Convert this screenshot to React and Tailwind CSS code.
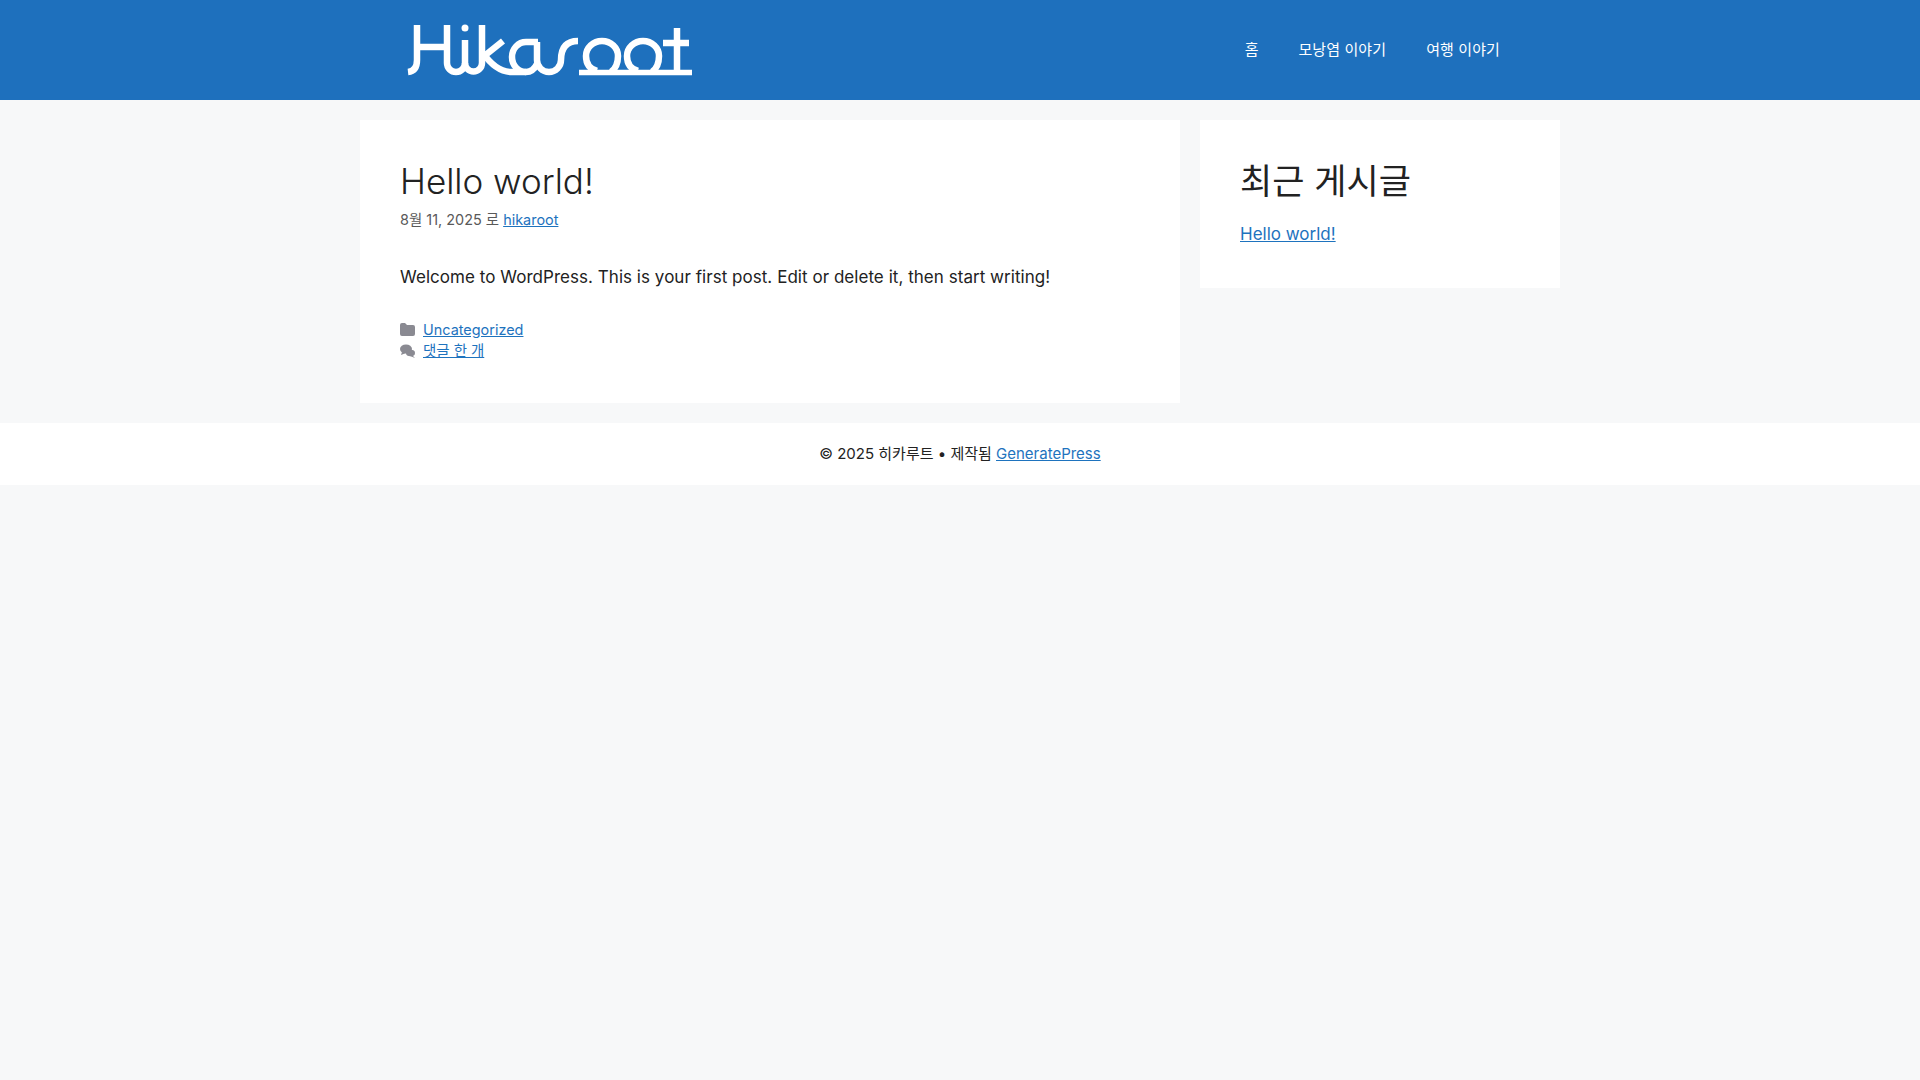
const font = 'font-["Inter","Noto_Sans_CJK_KR",sans-serif]';

function Logo() {
  return (
    <svg width="300" height="70" viewBox="400 15 300 70" fill="none" stroke="#fff" strokeWidth="6.5">
      {/* H */}
      <path d="M417 25 V60 Q417 71 408 72" />
      <path d="M417 47 H447" />
      {/* right stem of H runs into i, then into k */}
      <path d="M447 25 V63 A9 9 0 0 0 465 63 V40" />
      <path d="M465 63 A8.5 8.5 0 0 0 482 63 V25" />
      <circle cx="465" cy="28" r="3.5" fill="#fff" stroke="none" />
      {/* k arm and leg */}
      <path d="M483 57 L503 41" />
      <path d="M483 53 Q496 72 512 72 H526" />
      {/* a bowl, stem, r */}
      <path d="M538 42 H526 A14 15 0 0 0 526 72 Q533 72 537 64" />
      <path d="M537 42 V60 A12 12 0 0 0 561 60 Q561 41 578 41" />
      {/* baseline under oo and t */}
      <path d="M579 72.5 H692" strokeWidth="5.5" />
      {/* o o */}
      <path d="M597 71 Q586 68 586 56 A16 15 0 0 1 618 56 Q618 67 611 72" />
      <path d="M638 71 Q627 68 627 56 A16 15 0 0 1 659 56 Q659 67 652 72" />
      {/* t */}
      <path d="M677 28 V72 M663 43 H689" />
    </svg>
  );
}

export default function App() {
  return (
    <div className={`${font} min-h-screen bg-[#f7f8f9] text-[17px] leading-[1.5] text-[#222222]`}>
      <header className="bg-[#1e70bd]">
        <div className="mx-auto flex h-[100px] w-[1200px] items-center justify-between pr-[40px] pl-[40px]">
          <Logo />
          <nav className="flex text-[15px] text-white">
            <a className="px-[20px]">홈</a>
            <a className="px-[20px] tracking-[0.1px]">모낭염 이야기</a>
            <a className="px-[20px] tracking-[0.1px]">여행 이야기</a>
          </nav>
        </div>
      </header>

      <div className="mx-auto flex w-[1200px] items-start gap-[20px] pt-[20px]">
        <main className="w-[820px] bg-white px-[40px] pt-[40px] pb-[42px]">
          <h1 className="text-[35px] leading-[42px] font-light">Hello world!</h1>
          <p className="mt-[7px] text-[14.45px] text-[#595959]">
            8월 11, 2025 로 <a className="text-[#1e73be] underline">hikaroot</a>
          </p>
          <p className="mt-[34px] tracking-[0.04px]">Welcome to WordPress. This is your first post. Edit or delete it, then start writing!</p>
          <div className="mt-[29px] text-[14.45px] leading-[21px] text-[#1e73be]">
            <div className="flex items-center gap-[8px]">
              <svg width="15" height="13" viewBox="0 0 15 13" fill="#8a8a92"><path d="M0 2 Q0 0 2 0 H5 L7 2 H13 Q15 2 15 4 V11 Q15 13 13 13 H2 Q0 13 0 11 Z" /></svg>
              <a className="underline">Uncategorized</a>
            </div>
            <div className="flex items-center gap-[8px]">
              <svg width="15" height="14" viewBox="0 0 15 14" fill="#8a8a92"><ellipse cx="6" cy="5" rx="6" ry="4.5" /><path d="M2 8 L1 11 L6 9 Z" /><ellipse cx="10.5" cy="9" rx="4.5" ry="3.2" /><path d="M12 11 L15 14 L10 12 Z" /></svg>
              <a className="underline">댓글 한 개</a>
            </div>
          </div>
        </main>
        <aside className="w-[360px] bg-white p-[40px]">
          <h2 className="text-[35px] leading-[42px]">최근 게시글</h2>
          <a className="mt-[20px] block text-[#1e73be] underline">Hello world!</a>
        </aside>
      </div>

      <footer className="mt-[20px] flex h-[62px] items-center justify-center bg-white text-[15px]">
        <span>© 2025 히카루트 • 제작됨 <a className="text-[#1e73be] underline">GeneratePress</a></span>
      </footer>
    </div>
  );
}
